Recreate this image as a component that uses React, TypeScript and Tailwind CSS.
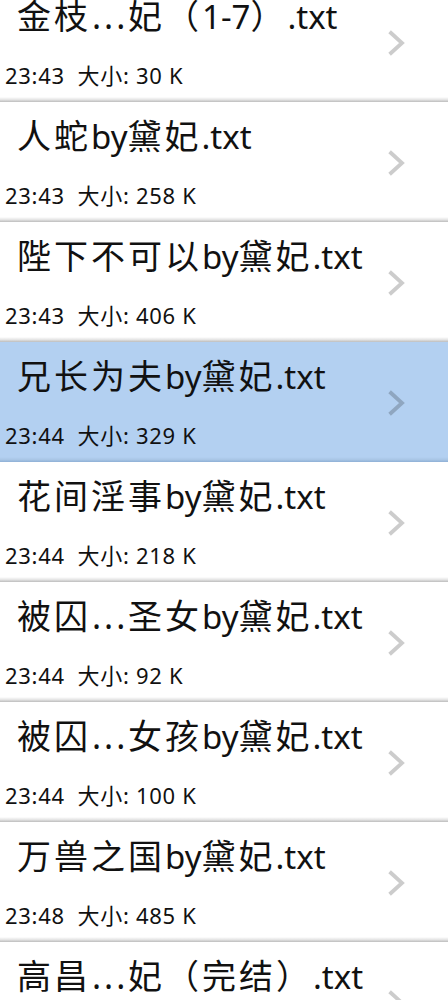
import React from "react";

type Item = { name: string; time: string; size: string; active?: boolean };

const items: Item[] = [
  { name: "金枝…妃（1-7）.txt", time: "23:43", size: "30 K" },
  { name: "人蛇by黛妃.txt", time: "23:43", size: "258 K" },
  { name: "陛下不可以by黛妃.txt", time: "23:43", size: "406 K" },
  { name: "兄长为夫by黛妃.txt", time: "23:44", size: "329 K", active: true },
  { name: "花间淫事by黛妃.txt", time: "23:44", size: "218 K" },
  { name: "被囚…圣女by黛妃.txt", time: "23:44", size: "92 K" },
  { name: "被囚…女孩by黛妃.txt", time: "23:44", size: "100 K" },
  { name: "万兽之国by黛妃.txt", time: "23:48", size: "485 K" },
  { name: "高昌…妃（完结）.txt", time: "23:48", size: "512 K" },
];

function Title({ text }: { text: string }) {
  const parts = text.match(/…|[\u3000-\u9fff\uff00-\uffef]+|[^\u3000-\u9fff\uff00-\uffef…]+/g) || [];
  return (
    <>
      {parts.map((p, i) => {
        if (p === "…")
          return (
            <span key={i} className="inline-block w-[37px] pl-[1px] tracking-[3px]">
              ...
            </span>
          );
        if (/[\u3000-\u9fff\uff00-\uffef]/.test(p))
          return (
            <span key={i} className="tracking-[3px]">
              {p}
            </span>
          );
        return (
          <span key={i} className="text-[33px]">
            {p}
          </span>
        );
      })}
    </>
  );
}

function Chevron() {
  return (
    <svg width="18" height="26" viewBox="0 0 18 26" className="shrink-0">
      <polyline
        points="3,3 14,13 3,23"
        fill="none"
        stroke="rgba(0,0,0,0.2)"
        strokeWidth="3.8"
        strokeLinecap="square"
      />
    </svg>
  );
}

function Row({ item }: { item: Item }) {
  return (
    <div className={item.active ? "bg-[#b3d0f1]" : "bg-white"}>
      <div className="flex h-[115px] items-center">
        <div className="flex-1 min-w-0 self-start">
          <div className="pl-[17px] pt-[14px] text-[34px] leading-[40px] text-[#111] whitespace-nowrap">
            <Title text={item.name} />
          </div>
          <div className="pl-[5px] mt-[26px] text-[22px] leading-[24px] tracking-[0.7px] text-[#111] whitespace-nowrap">
            {item.time}
            {"\u00a0\u00a0"}大小: {item.size}
          </div>
        </div>
        <div className="pr-[42px] pt-[6px]">
          <Chevron />
        </div>
      </div>
      {item.active ? (
        <div className="h-[5px] bg-gradient-to-b from-[#b3d0f1] via-[#a9c6e6] to-[#8fb0d6]" />
      ) : (
        <div className="h-[5px] bg-gradient-to-b from-white via-[#e6e6e6] to-[#bdbdbd]" />
      )}
    </div>
  );
}

export default function App() {
  return (
    <div
      className="w-[448px] h-[1000px] overflow-hidden bg-white"
      style={{ fontFamily: '"Noto Sans", "Noto Sans CJK SC", sans-serif' }}
    >
      <div className="-mt-[18px]">
        {items.map((it, i) => (
          <Row key={i} item={it} />
        ))}
      </div>
    </div>
  );
}
